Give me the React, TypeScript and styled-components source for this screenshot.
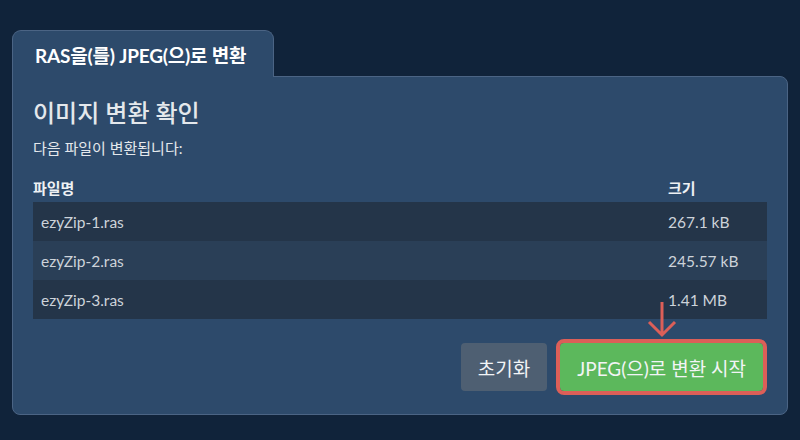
import React from 'react'
import styled, { createGlobalStyle } from 'styled-components'

const files = [
  { name: 'ezyZip-1.ras', size: '267.1 kB' },
  { name: 'ezyZip-2.ras', size: '245.57 kB' },
  { name: 'ezyZip-3.ras', size: '1.41 MB' }
]

const GlobalStyle = createGlobalStyle`
  html, body {
    margin: 0;
    background: #10233a;
  }
  body {
    font-family: 'Lato', 'Noto Sans CJK KR', sans-serif;
    color: #e6eaee;
  }
`

const Page = styled.div`
  padding: 30px 12px 0 12px;
`

const Tab = styled.div`
  position: relative;
  z-index: 1;
  display: flex;
  align-items: center;
  width: fit-content;
  height: 47px;
  padding: 0 27px 0 22px;
  margin-bottom: -1px;
  box-sizing: border-box;
  background: #2d4a6b;
  border: 1px solid #4b6484;
  border-bottom: none;
  border-radius: 9px 9px 0 0;
  font-size: 19px;
  font-weight: 700;
  color: #ffffff;
  letter-spacing: -0.2px;
`

const Panel = styled.div`
  background: #2d4a6b;
  border: 1px solid #4b6484;
  border-radius: 0 8px 8px 8px;
  padding: 21px 20px 23px 20px;
`

const Title = styled.h2`
  margin: 0;
  font-size: 24px;
  font-weight: 500;
  line-height: 29px;
  color: #e4e8ec;
`

const Subtitle = styled.p`
  margin: 11px 0 0 0;
  font-size: 15px;
  line-height: 20px;
  color: #e4e8ec;
`

const Table = styled.div`
  margin-top: 16px;
  display: flex;
  flex-direction: column;
`

const Row = styled.div<{ $head?: boolean; $alt?: boolean }>`
  display: grid;
  grid-template-columns: 1fr 99px;
  align-items: ${p => (p.$head ? 'end' : 'center')};
  height: ${p => (p.$head ? '28px' : '39px')};
  padding-bottom: ${p => (p.$head ? '4px' : '0')};
  box-sizing: border-box;
  background: ${p => (p.$head ? 'transparent' : p.$alt ? '#2a3f57' : '#243549')};
  font-size: ${p => (p.$head ? '15px' : '15.5px')};
  font-weight: ${p => (p.$head ? 700 : 400)};
  line-height: 20px;
  color: ${p => (p.$head ? '#eef1f4' : '#cdd3da')};
`

const NameCell = styled.span<{ $head?: boolean }>`
  padding-left: ${p => (p.$head ? '0' : '8px')};
`

const Actions = styled.div`
  display: flex;
  justify-content: flex-end;
  align-items: center;
  gap: 13px;
  margin-top: 24px;
  padding-right: 4px;
`

const Button = styled.button<{ $primary?: boolean }>`
  position: relative;
  height: 48px;
  padding: 0 17px;
  border: none;
  border-radius: 4px;
  font-family: 'Lato', 'Noto Sans CJK KR', sans-serif;
  font-size: 19px;
  color: #f2f4f6;
  background: ${p => (p.$primary ? '#5cb85c' : '#4e5f72')};
  outline: ${p => (p.$primary ? '4px solid #dc5f58' : 'none')};
  cursor: pointer;
`

const Arrow = styled.svg`
  position: absolute;
  left: 50%;
  top: -42px;
  width: 30px;
  height: 36px;
  margin-left: -15px;
  overflow: visible;
`

export default function App() {
  return (
    <>
      <GlobalStyle />
      <Page>
        <Tab>RAS을(를) JPEG(으)로 변환</Tab>
        <Panel>
          <Title>이미지 변환 확인</Title>
          <Subtitle>다음 파일이 변환됩니다:</Subtitle>
          <Table>
            <Row $head>
              <NameCell $head>파일명</NameCell>
              <span>크기</span>
            </Row>
            {files.map((f, i) => (
              <Row key={f.name} $alt={i % 2 === 1}>
                <NameCell>{f.name}</NameCell>
                <span>{f.size}</span>
              </Row>
            ))}
          </Table>
          <Actions>
            <Button>초기화</Button>
            <Button $primary>
              JPEG(으)로 변환 시작
              <Arrow viewBox="0 0 30 36">
                <path
                  d="M15 1 V34 M2 21 L15 34 L28 21"
                  fill="none"
                  stroke="#dc5f58"
                  strokeWidth="3"
                />
              </Arrow>
            </Button>
          </Actions>
        </Panel>
      </Page>
    </>
  )
}
